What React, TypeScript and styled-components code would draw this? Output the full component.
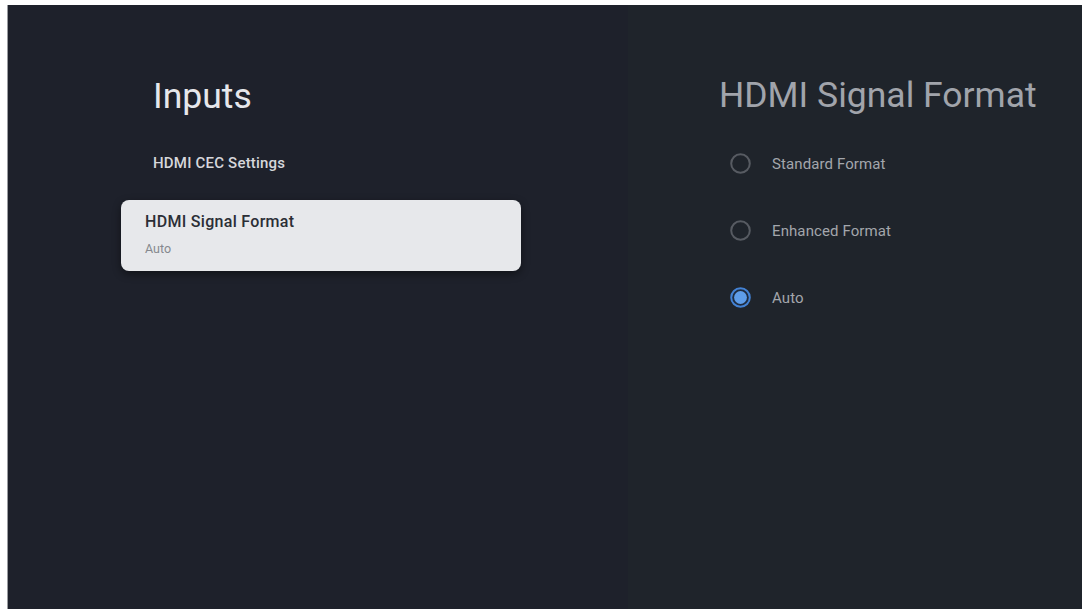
import React from "react";
import styled, { createGlobalStyle } from "styled-components";

const GlobalStyle = createGlobalStyle`
  html, body {
    margin: 0;
    padding: 0;
    background: #ffffff;
    font-family: Roboto, "Noto Sans", "Liberation Sans", sans-serif;
  }
  #root {
    width: 1082px;
    height: 609px;
    overflow: hidden;
  }
`;

const Frame = styled.div`
  width: 1082px;
  height: 609px;
  padding: 5px 0 0 7px;
  box-sizing: border-box;
  background: #ffffff;
`;

const Screen = styled.div`
  display: grid;
  grid-template-columns: 620px 1fr;
  height: 100%;
  border-left: 1px solid #9a9ca0;
`;

const MenuPanel = styled.section`
  background: #1e212b;
  padding: 71px 0 0 113px;
  display: flex;
  flex-direction: column;
`;

const PanelTitle = styled.h1<{ dim?: boolean }>`
  margin: 0 0 0 ${({ dim }) => (dim ? "0" : "32px")};
  font-size: ${({ dim }) => (dim ? "35.5px" : "35.5px")};
  line-height: 40px;
  font-weight: 400;
  color: ${({ dim }) => (dim ? "#a1a4ab" : "#e6e7eb")};
`;

const MenuList = styled.div`
  display: flex;
  flex-direction: column;
  width: 400px;
  margin-top: 37px;
`;

const MenuItem = styled.div<{ focused?: boolean }>`
  display: flex;
  flex-direction: column;
  gap: 9px;
  border-radius: 8px;
  margin-top: ${({ focused }) => (focused ? "27px" : "0")};
  padding: ${({ focused }) => (focused ? "12px 24px 14px" : "0 32px")};
  background: ${({ focused }) => (focused ? "#e7e8eb" : "transparent")};
  box-shadow: ${({ focused }) =>
    focused ? "0 3px 8px rgba(0, 0, 0, 0.45)" : "none"};
`;

const ItemTitle = styled.div<{ focused?: boolean }>`
  font-size: ${({ focused }) => (focused ? "16px" : "15px")};
  line-height: 20px;
  font-weight: 500;
  color: ${({ focused }) => (focused ? "#2b2e36" : "#d6d7db")};
  letter-spacing: ${({ focused }) => (focused ? "0.3px" : "0.2px")};
`;

const ItemValue = styled.div`
  font-size: 12.5px;
  line-height: 16px;
  color: #85888e;
`;

const OptionPanel = styled.section`
  background: #1f242b;
  padding: 70px 0 0 91px;
  display: flex;
  flex-direction: column;
`;

const OptionList = styled.div`
  display: flex;
  flex-direction: column;
  margin-top: 15px;
  padding-left: 11px;
`;

const OptionRow = styled.div`
  display: flex;
  align-items: center;
  gap: 21px;
  height: 67px;
`;

const OptionLabel = styled.span`
  font-size: 15px;
  color: #a3a6ac;
  letter-spacing: 0.1px;
`;

const RadioIcon: React.FC<{ checked: boolean }> = ({ checked }) => (
  <svg width="21" height="21" viewBox="0 0 21 21">
    {checked ? (
      <>
        <circle cx="10.5" cy="10.5" r="9.3" fill="#1f2c40" stroke="#4382d4" strokeWidth="2" />
        <circle cx="10.5" cy="10.5" r="6.4" fill="#5e9de9" />
      </>
    ) : (
      <circle cx="10.5" cy="10.5" r="9.3" fill="none" stroke="#575b62" strokeWidth="2" />
    )}
  </svg>
);

const options = [
  { label: "Standard Format", checked: false },
  { label: "Enhanced Format", checked: false },
  { label: "Auto", checked: true },
];

export default function App() {
  return (
    <>
      <GlobalStyle />
      <Frame>
        <Screen>
          <MenuPanel>
            <PanelTitle>Inputs</PanelTitle>
            <MenuList>
              <MenuItem>
                <ItemTitle>HDMI CEC Settings</ItemTitle>
              </MenuItem>
              <MenuItem focused>
                <ItemTitle focused>HDMI Signal Format</ItemTitle>
                <ItemValue>Auto</ItemValue>
              </MenuItem>
            </MenuList>
          </MenuPanel>
          <OptionPanel>
            <PanelTitle dim>HDMI Signal Format</PanelTitle>
            <OptionList>
              {options.map((o) => (
                <OptionRow key={o.label}>
                  <RadioIcon checked={o.checked} />
                  <OptionLabel>{o.label}</OptionLabel>
                </OptionRow>
              ))}
            </OptionList>
          </OptionPanel>
        </Screen>
      </Frame>
    </>
  );
}
